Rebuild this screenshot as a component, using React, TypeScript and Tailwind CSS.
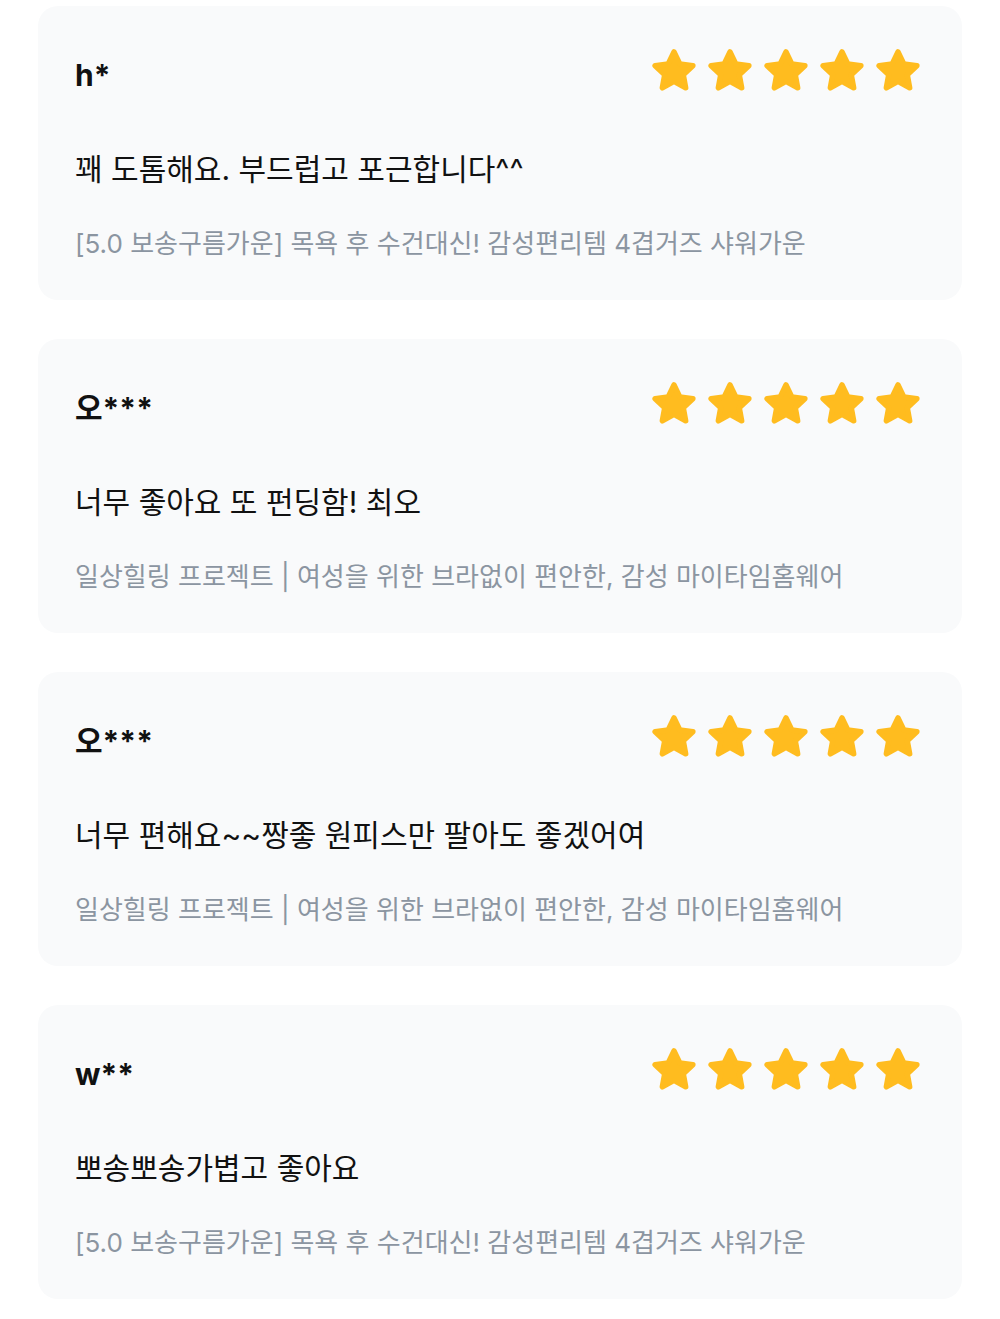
import React from "react";

const reviews = [
  { name: "h*", text: "꽤 도톰해요. 부드럽고 포근합니다^^", product: "[5.0 보송구름가운] 목욕 후 수건대신! 감성편리템 4겹거즈 샤워가운" },
  { name: "오***", text: "너무 좋아요 또 펀딩함! 최오", product: "일상힐링 프로젝트 | 여성을 위한 브라없이 편안한, 감성 마이타임홈웨어" },
  { name: "오***", text: "너무 편해요~~짱좋 원피스만 팔아도 좋겠어여", product: "일상힐링 프로젝트 | 여성을 위한 브라없이 편안한, 감성 마이타임홈웨어" },
  { name: "w**", text: "뽀송뽀송가볍고 좋아요", product: "[5.0 보송구름가운] 목욕 후 수건대신! 감성편리템 4겹거즈 샤워가운" },
];

function Star() {
  return (
    <svg width="48" height="48" viewBox="2 2 44 44">
      <polygon
        points="24,6.5 29.3,17.6 41.3,19.1 32.5,27.4 34.7,39.4 24,33.6 13.3,39.4 15.5,27.4 6.7,19.1 18.7,17.6"
        fill="#ffbc1f"
        stroke="#ffbc1f"
        strokeWidth="5"
        strokeLinejoin="round"
      />
    </svg>
  );
}

export default function App() {
  return (
    <div
      className="w-[1000px] bg-white pt-[6px] pb-[21px] px-[38px] flex flex-col gap-[39px]"
      style={{ fontFamily: 'Inter, "Noto Sans CJK KR", sans-serif' }}
    >
      {reviews.map((r, i) => (
        <div key={i} className="bg-[#f9fafb] rounded-[20px] h-[294px] pt-[41px] pl-[37px] pr-[40px]">
          <div className="flex justify-between items-center h-[48px]">
            <div className="text-[30px] font-bold text-[#111] leading-[48px] translate-y-[4px]">{r.name}</div>
            <div className="flex gap-[8px]">
              <Star />
              <Star />
              <Star />
              <Star />
              <Star />
            </div>
          </div>
          <div className="mt-[54px] text-[30px] leading-[40px] text-[#111]">{r.text}</div>
          <div className="mt-[38px] text-[26px] leading-[34px] text-[#8b95a1]">{r.product}</div>
        </div>
      ))}
    </div>
  );
}
